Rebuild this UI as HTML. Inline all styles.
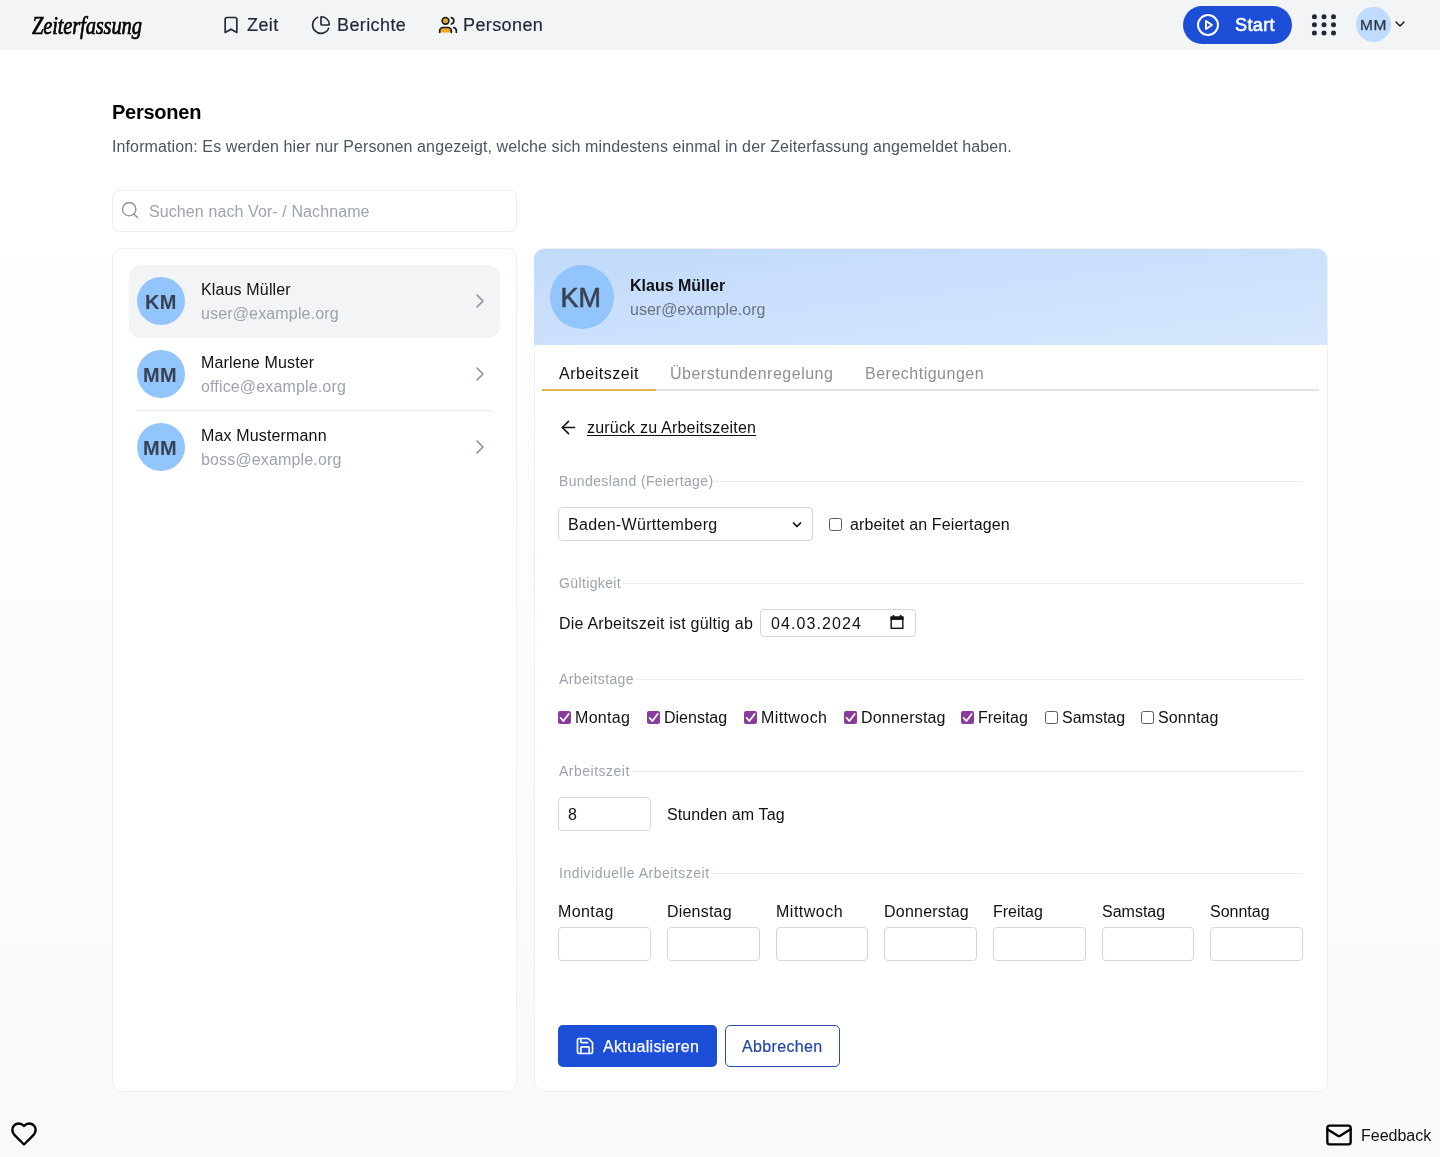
<!DOCTYPE html>
<html lang="de">
<head>
<meta charset="utf-8">
<title>Zeiterfassung</title>
<style>
*{box-sizing:border-box;margin:0;padding:0}
html,body{width:1440px;height:1157px;overflow:hidden}
body{font-family:"Liberation Sans",sans-serif;color:#111827;background:#fff;position:relative}
#root{position:absolute;left:0;top:0;width:1440px;height:1157px;will-change:transform;background:linear-gradient(180deg,#ffffff 0px,#ffffff 120px,#f8f9f9 1157px)}
.t{position:absolute;white-space:nowrap;line-height:1}
.nav{position:absolute;left:0;top:0;width:1440px;height:50px;background:#f3f4f6}
.logo{position:absolute;left:32px;top:13px;font-family:"Liberation Serif",serif;font-style:italic;font-size:26px;color:#000;letter-spacing:-0.2px;line-height:1;-webkit-text-stroke:0.7px #000;transform:scaleX(0.79);transform-origin:0 0}
.navtxt{font-size:18px;color:#1f2937;letter-spacing:0.4px;-webkit-text-stroke:0.2px #1f2937}
.startbtn{position:absolute;left:1183px;top:6px;width:109px;height:38px;border-radius:19px;background:#1d4ed8}
.avatar-sm{position:absolute;left:1356px;top:6.5px;width:35px;height:35px;border-radius:50%;background:#bfdbfe}
.card{position:absolute;background:#fff;border:1px solid #eef0f2;border-radius:10px}
.left{left:112px;top:248px;width:405px;height:844px}
.right{left:534px;top:248px;width:794px;height:844px;overflow:hidden}
.sel{position:absolute;left:129px;top:265px;width:371px;height:73px;border-radius:12px;background:#f3f4f6}
.av{position:absolute;width:48px;height:48px;border-radius:50%;background:#93c5fd}
.avt{font-size:20px;font-weight:bold;color:#374151;letter-spacing:0.3px}
.nm{font-size:16px;color:#111;letter-spacing:0.15px}
.em{font-size:16px;color:#9ca3af;letter-spacing:0.15px}
.hdr{position:absolute;left:534px;top:249px;width:793px;height:96px;border-radius:10px 10px 0 0;background:linear-gradient(to bottom right,#c1dafb,#d6e7fd)}
.legend{font-size:14px;color:#9ca3af;letter-spacing:0.37px}
.line{position:absolute;height:1px;background:#ececec}
.lbl{font-size:16px;color:#111}
.box{position:absolute;background:#fff;border:1px solid #d6d7d9;border-radius:4px}
.cbon{position:absolute;width:13px;height:13px;border-radius:2px;background:#7e3f98}
.cboff{position:absolute;width:13px;height:13px;border-radius:2.5px;border:1px solid #5e5e5e;background:#fff}
</style>
</head>
<body>
<div id="root">
<!-- NAV -->
<div class="nav"></div>
<div class="logo">Zeiterfassung</div>
<svg class="t" style="left:221px;top:15px" width="20" height="20" viewBox="0 0 24 24" fill="none" stroke="#1f2937" stroke-width="2" stroke-linecap="round" stroke-linejoin="round"><path d="m19 21-7-4-7 4V5a2 2 0 0 1 2-2h10a2 2 0 0 1 2 2v16z"/></svg>
<div class="t navtxt" style="left:247px;top:16px">Zeit</div>
<svg class="t" style="left:311px;top:15px" width="20" height="20" viewBox="0 0 24 24" fill="none" stroke="#1f2937" stroke-width="2" stroke-linecap="round" stroke-linejoin="round"><path d="M21 12c.552 0 1.005-.449.95-.998a10 10 0 0 0-8.953-8.951c-.55-.055-.998.398-.998.95v8a1 1 0 0 0 1 1z"/><path d="M21.21 15.89A10 10 0 1 1 8 2.83"/></svg>
<div class="t navtxt" style="left:337px;top:16px">Berichte</div>
<svg class="t" style="left:438px;top:15px" width="20" height="20" viewBox="0 0 24 24" fill="none" stroke="#1a1a1a" stroke-width="2" stroke-linecap="round" stroke-linejoin="round"><path d="M16 21v-2a4 4 0 0 0-4-4H6a4 4 0 0 0-4 4v2" fill="#eea526"/><circle cx="9" cy="7" r="4" fill="#eea526"/><path d="M22 21v-2a4 4 0 0 0-3-3.87"/><path d="M16 3.13a4 4 0 0 1 0 7.75"/></svg>
<div class="t navtxt" style="left:463px;top:16px">Personen</div>
<div class="startbtn"></div>
<svg class="t" style="left:1196px;top:13px" width="24" height="24" viewBox="0 0 24 24" fill="none" stroke="#fff" stroke-width="2" stroke-linecap="round" stroke-linejoin="round"><circle cx="12" cy="12" r="10"/><polygon points="10 8 16 12 10 16 10 8"/></svg>
<div class="t" style="left:1235px;top:16px;font-size:18px;color:#fff;letter-spacing:0.4px;-webkit-text-stroke:0.55px #fff">Start</div>
<svg class="t" style="left:1310px;top:12px" width="28" height="26" viewBox="0 0 28 26" fill="#1f2937">
  <circle cx="4.4" cy="4.8" r="2.5"/><circle cx="14" cy="4.8" r="2.5"/><circle cx="23.5" cy="4.8" r="2.5"/>
  <circle cx="4.4" cy="12.8" r="2.5"/><circle cx="14" cy="12.8" r="2.5"/><circle cx="23.5" cy="12.8" r="2.5"/>
  <circle cx="4.4" cy="21" r="2.5"/><circle cx="14" cy="21" r="2.5"/><circle cx="23.5" cy="21" r="2.5"/></svg>
<div class="avatar-sm"></div>
<div class="t" style="left:1360px;top:16.5px;font-size:15.5px;color:#2a3546;letter-spacing:0.5px;-webkit-text-stroke:0.25px #2a3546">MM</div>
<svg class="t" style="left:1392px;top:16px" width="16" height="16" viewBox="0 0 24 24" fill="none" stroke="#111" stroke-width="2.1" stroke-linecap="round" stroke-linejoin="round"><path d="m6 9 6 6 6-6"/></svg>

<!-- HEADING -->
<div class="t" style="left:112px;top:102px;font-size:20px;font-weight:bold;color:#000;letter-spacing:-0.25px">Personen</div>
<div class="t" style="left:112px;top:139px;font-size:16px;color:#4b5563;letter-spacing:0.11px">Information: Es werden hier nur Personen angezeigt, welche sich mindestens einmal in der Zeiterfassung angemeldet haben.</div>

<!-- SEARCH -->
<div class="box" style="left:112px;top:190px;width:405px;height:42px;border-color:#eceef1;border-radius:8px"></div>
<svg class="t" style="left:120px;top:200px" width="20" height="20" viewBox="0 0 24 24" fill="none" stroke="#8e9095" stroke-width="1.65" stroke-linecap="round" stroke-linejoin="round"><circle cx="11" cy="11" r="8"/><path d="m21 21-4.3-4.3"/></svg>
<div class="t" style="left:149px;top:204px;font-size:16px;color:#9ca3af;letter-spacing:0.1px">Suchen nach Vor- / Nachname</div>

<!-- LEFT CARD -->
<div class="card left"></div>
<div class="sel"></div>
<div class="av" style="left:137px;top:277px"></div>
<div class="t avt" style="left:145px;top:292px">KM</div>
<div class="t nm" style="left:201px;top:282px">Klaus Müller</div>
<div class="t em" style="left:201px;top:306px">user@example.org</div>
<div class="av" style="left:137px;top:350px"></div>
<div class="t avt" style="left:143px;top:365px">MM</div>
<div class="t nm" style="left:201px;top:355px">Marlene Muster</div>
<div class="t em" style="left:201px;top:379px">office@example.org</div>
<div class="line" style="left:136px;top:410px;width:356px"></div>
<div class="av" style="left:137px;top:423px"></div>
<div class="t avt" style="left:143px;top:438px">MM</div>
<div class="t nm" style="left:201px;top:428px">Max Mustermann</div>
<div class="t em" style="left:201px;top:452px">boss@example.org</div>
<svg class="t" style="left:468px;top:289px" width="24" height="24" viewBox="0 0 24 24" fill="none" stroke="#8b9099" stroke-width="1.6" stroke-linecap="round" stroke-linejoin="round"><path d="m9 18 6-6-6-6"/></svg>
<svg class="t" style="left:468px;top:362px" width="24" height="24" viewBox="0 0 24 24" fill="none" stroke="#8b9099" stroke-width="1.6" stroke-linecap="round" stroke-linejoin="round"><path d="m9 18 6-6-6-6"/></svg>
<svg class="t" style="left:468px;top:435px" width="24" height="24" viewBox="0 0 24 24" fill="none" stroke="#8b9099" stroke-width="1.6" stroke-linecap="round" stroke-linejoin="round"><path d="m9 18 6-6-6-6"/></svg>

<!-- RIGHT CARD -->
<div class="card right"></div>
<div class="hdr"></div>
<div class="av" style="left:550px;top:265px;width:64px;height:64px"></div>
<div class="t" style="left:560.5px;top:285px;font-size:27px;color:#3a4250;-webkit-text-stroke:0.55px #3a4250">KM</div>
<div class="t" style="left:630px;top:278px;font-size:16px;font-weight:bold;color:#111">Klaus Müller</div>
<div class="t" style="left:630px;top:302px;font-size:16px;color:#6b7280">user@example.org</div>

<!-- TABS -->
<div class="line" style="left:543px;top:389px;width:776px;height:2px;background:#e3e4e6"></div>
<div class="line" style="left:542px;top:389px;width:114px;height:2px;background:#dcb550"></div>
<div class="t" style="left:559px;top:366px;font-size:16px;color:#111;letter-spacing:0.48px">Arbeitszeit</div>
<div class="t" style="left:670px;top:366px;font-size:16px;color:#8d8f94;letter-spacing:0.5px">Überstundenregelung</div>
<div class="t" style="left:865px;top:366px;font-size:16px;color:#8d8f94;letter-spacing:0.5px">Berechtigungen</div>

<!-- BACK LINK -->
<svg class="t" style="left:557.5px;top:417px" width="21" height="21" viewBox="0 0 24 24" fill="none" stroke="#111" stroke-width="1.8" stroke-linecap="round" stroke-linejoin="round"><path d="m12 19-7-7 7-7"/><path d="M19 12H5"/></svg>
<div class="t" style="left:587px;top:420px;font-size:16px;color:#111;letter-spacing:0.2px;text-decoration:underline;text-underline-offset:2px">zurück zu Arbeitszeiten</div>

<!-- BUNDESLAND -->
<div class="t legend" style="left:559px;top:474px">Bundesland (Feiertage)</div>
<div class="line" style="left:714px;top:481px;width:589px"></div>
<div class="box" style="left:558px;top:507px;width:255px;height:34px"></div>
<div class="t lbl" style="left:568px;top:517px;letter-spacing:0.32px">Baden-Württemberg</div>
<svg class="t" style="left:790px;top:518.5px" width="14" height="12" viewBox="0 0 14 12" fill="none" stroke="#111" stroke-width="1.7" stroke-linecap="round" stroke-linejoin="round"><path d="M3.5 4l3.5 3.5L10.5 4"/></svg>
<div class="cboff" style="left:829px;top:518px"></div>
<div class="t lbl" style="left:850px;top:517px;letter-spacing:0.15px">arbeitet an Feiertagen</div>

<!-- GUELTIGKEIT -->
<div class="t legend" style="left:559px;top:576px">Gültigkeit</div>
<div class="line" style="left:623px;top:583px;width:680px"></div>
<div class="t lbl" style="left:559px;top:616px;letter-spacing:0.22px">Die Arbeitszeit ist gültig ab</div>
<div class="box" style="left:760px;top:609px;width:156px;height:28px"></div>
<div class="t lbl" style="left:771px;top:616px;letter-spacing:1.1px">04.03.2024</div>
<svg class="t" style="left:890px;top:614px" width="14" height="16" viewBox="0 0 14 16"><rect x="1.2" y="3.2" width="11.6" height="11.1" fill="none" stroke="#111" stroke-width="1.4"/><rect x="0.5" y="2.5" width="13" height="3.4" fill="#111"/><rect x="2.6" y="1" width="1.6" height="2" fill="#111"/><rect x="9.8" y="1" width="1.6" height="2" fill="#111"/></svg>

<!-- ARBEITSTAGE -->
<div class="t legend" style="left:559px;top:672px">Arbeitstage</div>
<div class="line" style="left:636px;top:679px;width:667px"></div>
<svg width="0" height="0" style="position:absolute"><defs><g id="ck"><rect width="13" height="13" rx="2" fill="#8a3c9c"/><path d="M2.5 6.8l2.9 3.3 5.3-7.2" fill="none" stroke="#fff" stroke-width="1.7" stroke-linecap="round" stroke-linejoin="round"/></g></defs></svg>
<svg class="t" style="left:558px;top:711px" width="13" height="13"><use href="#ck"/></svg>
<div class="t lbl" style="left:575px;top:710px;letter-spacing:0.3px">Montag</div>
<svg class="t" style="left:647px;top:711px" width="13" height="13"><use href="#ck"/></svg>
<div class="t lbl" style="left:664px;top:710px">Dienstag</div>
<svg class="t" style="left:744px;top:711px" width="13" height="13"><use href="#ck"/></svg>
<div class="t lbl" style="left:761px;top:710px;letter-spacing:0.4px">Mittwoch</div>
<svg class="t" style="left:844px;top:711px" width="13" height="13"><use href="#ck"/></svg>
<div class="t lbl" style="left:861px;top:710px;letter-spacing:0.2px">Donnerstag</div>
<svg class="t" style="left:961px;top:711px" width="13" height="13"><use href="#ck"/></svg>
<div class="t lbl" style="left:978px;top:710px">Freitag</div>
<div class="cboff" style="left:1045px;top:711px"></div>
<div class="t lbl" style="left:1062px;top:710px">Samstag</div>
<div class="cboff" style="left:1141px;top:711px"></div>
<div class="t lbl" style="left:1158px;top:710px;letter-spacing:0.15px">Sonntag</div>

<!-- ARBEITSZEIT -->
<div class="t legend" style="left:559px;top:764px;letter-spacing:0.5px">Arbeitszeit</div>
<div class="line" style="left:632px;top:771px;width:671px"></div>
<div class="box" style="left:558px;top:797px;width:93px;height:34px"></div>
<div class="t lbl" style="left:568px;top:807px">8</div>
<div class="t lbl" style="left:667px;top:807px;letter-spacing:0.1px">Stunden am Tag</div>

<!-- INDIVIDUELLE -->
<div class="t legend" style="left:559px;top:866px;letter-spacing:0.5px">Individuelle Arbeitszeit</div>
<div class="line" style="left:711px;top:873px;width:592px"></div>
<div class="t lbl" style="left:558px;top:904px;letter-spacing:0.4px">Montag</div>
<div class="t lbl" style="left:667px;top:904px;letter-spacing:0.2px">Dienstag</div>
<div class="t lbl" style="left:776px;top:904px;letter-spacing:0.5px">Mittwoch</div>
<div class="t lbl" style="left:884px;top:904px;letter-spacing:0.22px">Donnerstag</div>
<div class="t lbl" style="left:993px;top:904px">Freitag</div>
<div class="t lbl" style="left:1102px;top:904px">Samstag</div>
<div class="t lbl" style="left:1210px;top:904px">Sonntag</div>
<div class="box" style="left:558px;top:927px;width:93px;height:34px"></div>
<div class="box" style="left:667px;top:927px;width:93px;height:34px"></div>
<div class="box" style="left:776px;top:927px;width:92px;height:34px"></div>
<div class="box" style="left:884px;top:927px;width:93px;height:34px"></div>
<div class="box" style="left:993px;top:927px;width:93px;height:34px"></div>
<div class="box" style="left:1102px;top:927px;width:92px;height:34px"></div>
<div class="box" style="left:1210px;top:927px;width:93px;height:34px"></div>

<!-- BUTTONS -->
<div class="t" style="left:558px;top:1025px;width:159px;height:42px;background:#1d4ed8;border-radius:5px"></div>
<svg class="t" style="left:575px;top:1036px" width="20" height="20" viewBox="0 0 24 24" fill="none" stroke="#fff" stroke-width="2" stroke-linecap="round" stroke-linejoin="round"><path d="M15.2 3a2 2 0 0 1 1.4.6l3.8 3.8a2 2 0 0 1 .6 1.4V19a2 2 0 0 1-2 2H5a2 2 0 0 1-2-2V5a2 2 0 0 1 2-2z"/><path d="M17 21v-7a1 1 0 0 0-1-1H8a1 1 0 0 0-1 1v7"/><path d="M7 3v4a1 1 0 0 0 1 1h7"/></svg>
<div class="t" style="left:603px;top:1039px;font-size:16px;color:#fff;letter-spacing:0.35px;-webkit-text-stroke:0.25px #fff">Aktualisieren</div>
<div class="t" style="left:725px;top:1025px;width:115px;height:42px;border:1px solid #2a4cae;border-radius:5px;background:#fff"></div>
<div class="t" style="left:742px;top:1039px;font-size:16px;color:#2545a8;letter-spacing:0.35px;-webkit-text-stroke:0.2px #2545a8">Abbrechen</div>

<!-- FOOTER -->
<svg class="t" style="left:9.6px;top:1119.7px" width="28" height="28" viewBox="0 0 24 24" fill="none" stroke="#000" stroke-width="2" stroke-linecap="round" stroke-linejoin="round"><path d="M19 14c1.490-1.460 3-3.210 3-5.500A5.500 5.500 0 0 0 16.500 3c-1.760 0-3 .5-4.500 2-1.500-1.500-2.740-2-4.500-2A5.500 5.500 0 0 0 2 8.500c0 2.300 1.500 4.050 3 5.500l7 7Z"/></svg>
<svg class="t" style="left:1325px;top:1121px" width="28" height="28" viewBox="0 0 24 24" fill="none" stroke="#000" stroke-width="2" stroke-linecap="round" stroke-linejoin="round"><rect width="20" height="16" x="2" y="4" rx="2"/><path d="m22 7-8.970 5.700a1.940 1.940 0 0 1-2.060 0L2 7"/></svg>
<div class="t" style="left:1361px;top:1128px;font-size:16px;color:#111">Feedback</div>
</div>
</body>
</html>
